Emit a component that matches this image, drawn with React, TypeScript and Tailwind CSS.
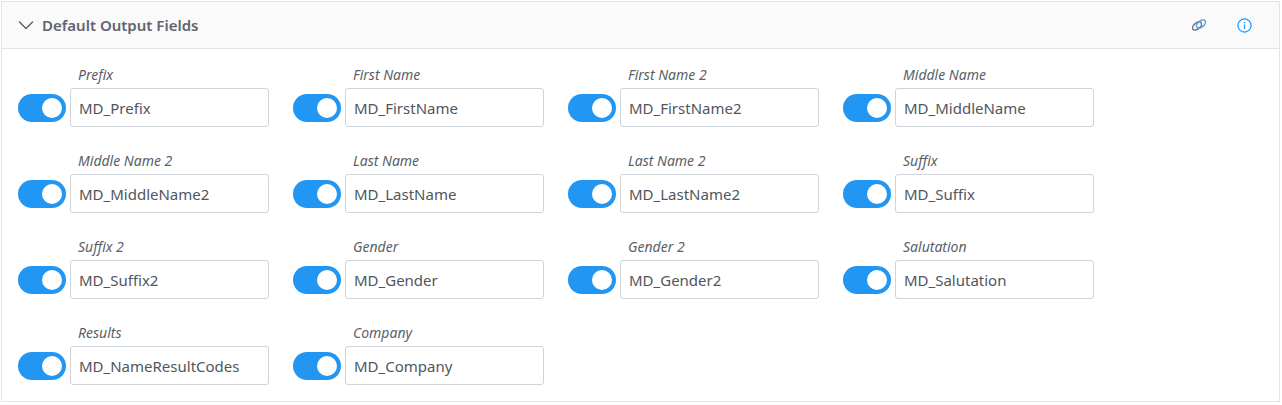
import React from "react";

const fields: [string, string][] = [
  ["Prefix", "MD_Prefix"],
  ["First Name", "MD_FirstName"],
  ["First Name 2", "MD_FirstName2"],
  ["Middle Name", "MD_MiddleName"],
  ["Middle Name 2", "MD_MiddleName2"],
  ["Last Name", "MD_LastName"],
  ["Last Name 2", "MD_LastName2"],
  ["Suffix", "MD_Suffix"],
  ["Suffix 2", "MD_Suffix2"],
  ["Gender", "MD_Gender"],
  ["Gender 2", "MD_Gender2"],
  ["Salutation", "MD_Salutation"],
  ["Results", "MD_NameResultCodes"],
  ["Company", "MD_Company"],
];

function Field({ label, value }: { label: string; value: string }) {
  return (
    <div className="flex h-[86px] w-[275px] items-start">
      <div className="mt-[28px] mr-[4px] flex h-[28px] w-[48px] items-center justify-end rounded-full bg-[#2196f3] pr-[4px]">
        <div className="h-[20px] w-[20px] rounded-full bg-white" />
      </div>
      <div className="flex flex-col">
        <div className="h-[22px] pl-[8px] text-[14px] leading-[18px] italic text-[#5a5f69]">{label}</div>
        <div className="flex h-[39px] w-[199px] items-center rounded-[3px] border border-[#ced4da] bg-white pl-[8px] pt-[1px] text-[15px] text-[#50565e]">
          {value}
        </div>
      </div>
    </div>
  );
}

export default function App() {
  return (
    <div className="h-[405px] w-[1282px] bg-white p-[1px] font-['Noto_Sans','Open_Sans',sans-serif]">
      <div className="h-[401px] w-[1279px] border border-[#e2e4e8]">
        <div className="flex h-[47px] items-center border-b border-[#e2e4e8] bg-[#fafafa] pl-[16px] pr-[27px]">
          <svg width="16" height="16" viewBox="0 0 16 16" fill="none" stroke="#5f6570" strokeWidth="1.5" strokeLinecap="round" strokeLinejoin="round">
            <path d="M1.5 5l6.5 6.5L14.5 5" />
          </svg>
          <span className="ml-[8px] text-[15px] font-semibold text-[#5f6570]">Default Output Fields</span>
          <div className="ml-auto flex items-center gap-[30px]">
            <svg width="16" height="14" viewBox="0 0 16 14" fill="none" strokeWidth="1.4">
              <ellipse cx="6" cy="8" rx="5.2" ry="3" transform="rotate(-38 6 8)" stroke="#6b7280" />
              <ellipse cx="10" cy="6" rx="5.2" ry="3" transform="rotate(-38 10 6)" stroke="#5b9bd5" />
            </svg>
            <svg width="15" height="15" viewBox="0 0 15 15" fill="none" stroke="#2196f3" strokeWidth="1.2">
              <circle cx="7.5" cy="7.5" r="6.6" />
              <path d="M7.5 6.5v4.5M7.5 4v1.2" />
            </svg>
          </div>
        </div>
        <div className="flex w-[1116px] flex-wrap pl-[16px] pt-[17px]">
          {fields.map(([l, v]) => (
            <Field key={l} label={l} value={v} />
          ))}
        </div>
      </div>
    </div>
  );
}
